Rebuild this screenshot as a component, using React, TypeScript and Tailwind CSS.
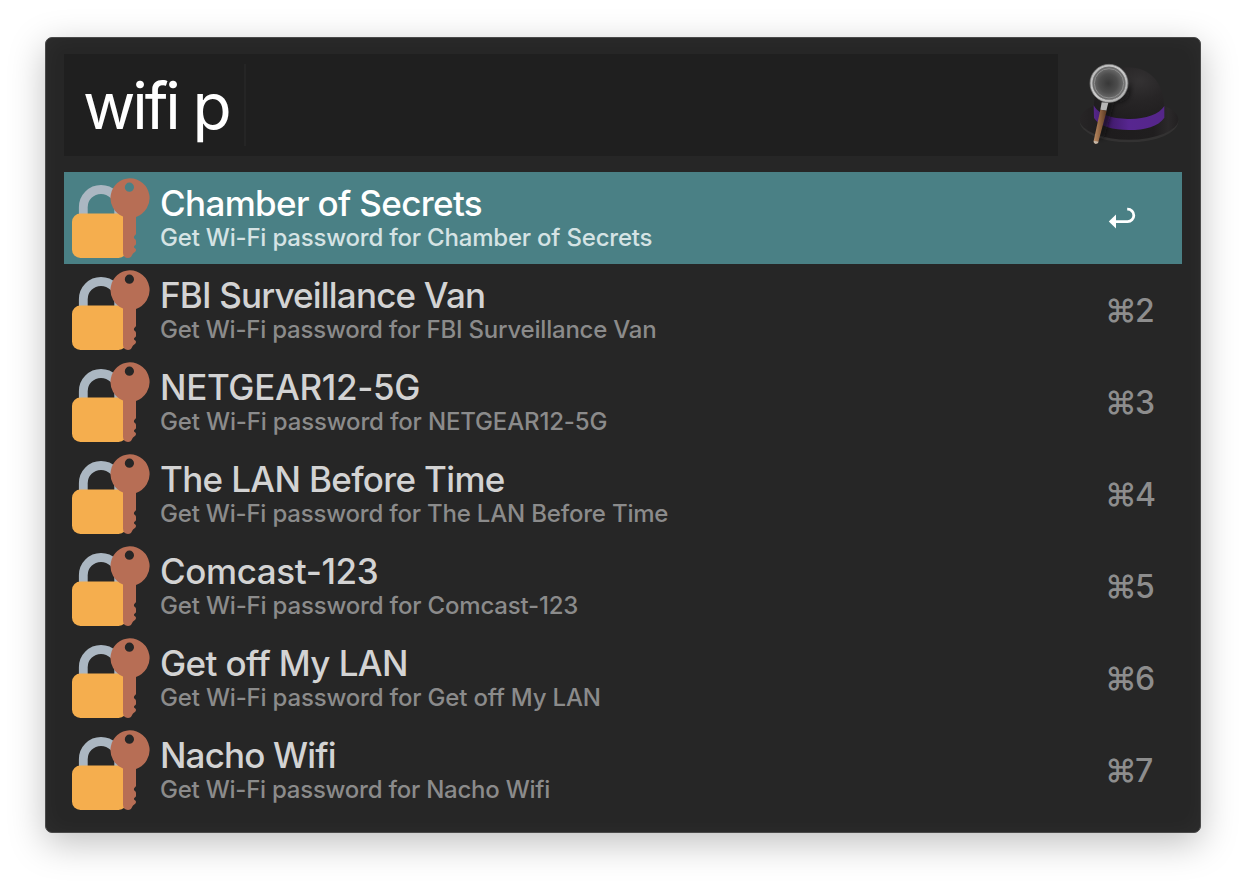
import React from "react";

type Result = { name: string; key: string; title: string; sub: string };

const results: Result[] = [
  { name: "Chamber of Secrets", key: "", title: "tracking-[-0.65px]", sub: "tracking-[-0.2px]" },
  { name: "FBI Surveillance Van", key: "2", title: "tracking-[-0.82px]", sub: "tracking-[-0.22px]" },
  { name: "NETGEAR12-5G", key: "3", title: "tracking-[-0.34px]", sub: "tracking-[-0.16px]" },
  { name: "The LAN Before Time", key: "4", title: "tracking-[-0.66px]", sub: "tracking-[-0.2px]" },
  { name: "Comcast-123", key: "5", title: "tracking-[-0.4px]", sub: "tracking-[-0.18px]" },
  { name: "Get off My LAN", key: "6", title: "tracking-[-0.6px]", sub: "tracking-[-0.18px]" },
  { name: "Nacho Wifi", key: "7", title: "tracking-[-0.85px]", sub: "tracking-[-0.24px]" },
];

function LockKey() {
  return (
    <svg className="h-20 w-20 shrink-0" viewBox="0 0 80 80">
      <path d="M12.3 40V29.2a17.7 17.7 0 0 1 35.4 0V40" fill="none" stroke="#abb7c2" strokeWidth="8.8" />
      <rect x="1" y="35.6" width="55" height="44.4" rx="8.5" fill="#f5ae4e" />
      <path
        fillRule="evenodd"
        fill="#b76e55"
        d="M58.7.3a19.8 19.8 0 0 1 6.3 38.6V55.5q0 1.2-1 1.8-1.1.8-1.1 2t1 1.8q1.1.7 1.1 2v2.6q0 1.2-1.1 1.9-.9.5-.9 1.3t1 1.3q1 .6 1 1.8 0 1.6-1.4 2.3-1.9 1-2.5 2.6-1 3-4.1 3-5 0-5-5.4V38.5A19.8 19.8 0 0 1 58.7.3ZM58.4 4.6a4.6 4.6 0 1 0 0 9.2a4.6 4.6 0 0 0 0-9.2Z"
      />
    </svg>
  );
}

function Hat() {
  return (
    <svg className="h-[110px] w-[130px] shrink-0" viewBox="0 0 390 330">
      <defs>
        <radialGradient id="crown" cx="0.65" cy="0.25" r="0.75">
          <stop offset="0" stopColor="#343233" />
          <stop offset="0.5" stopColor="#272526" />
          <stop offset="1" stopColor="#201e1f" />
        </radialGradient>
        <linearGradient id="brim" x1="0" x2="1">
          <stop offset="0" stopColor="#272526" />
          <stop offset="0.3" stopColor="#1e1c1d" />
          <stop offset="0.75" stopColor="#201e1f" />
          <stop offset="0.9" stopColor="#2b292a" />
          <stop offset="1" stopColor="#222021" />
        </linearGradient>
        <linearGradient id="ribbon" x1="0" x2="1">
          <stop offset="0" stopColor="#552689" />
          <stop offset="0.2" stopColor="#3f1a68" />
          <stop offset="0.5" stopColor="#572690" />
          <stop offset="1" stopColor="#552689" />
        </linearGradient>
        <radialGradient id="lens" cx="0.48" cy="0.5" r="0.55">
          <stop offset="0" stopColor="#383838" />
          <stop offset="0.5" stopColor="#4d4d4d" />
          <stop offset="1" stopColor="#7b7b7b" />
        </radialGradient>
        <linearGradient id="metal" x1="0" y1="0" x2="1" y2="1">
          <stop offset="0" stopColor="#b4b4b4" />
          <stop offset="0.5" stopColor="#cccccc" />
          <stop offset="1" stopColor="#a9a9a9" />
        </linearGradient>
        <linearGradient id="wood" x1="0" x2="1">
          <stop offset="0" stopColor="#bd8e66" />
          <stop offset="0.5" stopColor="#8e6240" />
          <stop offset="1" stopColor="#5a3a24" />
        </linearGradient>
        <filter id="soft" x="-40%" y="-40%" width="180%" height="180%">
          <feGaussianBlur stdDeviation="6" />
        </filter>
      </defs>
      <ellipse cx="192" cy="214" rx="148" ry="63" fill="#333232" />
      <ellipse cx="192" cy="209" rx="148" ry="60" fill="url(#brim)" />
      <path d="M86 190C84 100 122 52 188 52S300 96 298 186C270 216 118 224 86 190Z" fill="url(#crown)" />
      <path d="M86 166C104 198 150 207 196 207S284 192 298 168V203C280 230 240 240 192 240S104 230 87 204Z" fill="url(#ribbon)" />
      <path d="M148 158L118 262 100 268 122 158Q190 150 194 92Q208 158 148 158Z" fill="#0b0b0b" opacity="0.65" filter="url(#soft)" />
      <circle cx="132" cy="100" r="50" fill="url(#lens)" />
      <circle cx="132" cy="100" r="44" fill="none" stroke="#8b8b8b" strokeWidth="3" />
      <circle cx="132" cy="100" r="53" fill="none" stroke="url(#metal)" strokeWidth="7" />
      <circle cx="132" cy="100" r="57" fill="none" stroke="#858585" strokeWidth="2" />
      <path d="M110 157L130 158 124 182 106 179Z" fill="#b5b5b5" />
      <path d="M106 179L125 182 100 276Q98 282 91 281Q85 279 86 273Z" fill="url(#wood)" />
      <path d="M86 272L101 275Q99 282 91 281Q85 279 86 272Z" fill="#c4b7a9" />
    </svg>
  );
}

function Return() {
  return (
    <svg className="mr-[46px] h-[24px] w-[28px] shrink-0" viewBox="0 0 28 24">
      <path d="M6 15.6H19a6 6 0 0 0 0-12.4H18.6" fill="none" stroke="#fff" strokeWidth="2.8" transform="translate(.6 0)" />
      <path d="M.8 15.6L8 8.6V22.6Z" fill="#fff" />
    </svg>
  );
}

export default function App() {
  return (
    <div className="h-[886px] w-[1246px] overflow-hidden bg-white pt-[37px] pl-[45px] font-['Inter',sans-serif]">
      <main className="flex h-[796px] w-[1156px] flex-col rounded-[7px] border border-[#4a4a4a] bg-[#262626] pt-4 pl-[18px] shadow-[0_10px_36px_rgba(0,0,0,0.25),inset_0_0_24px_rgba(255,255,255,0.035)]">
        <header className="flex h-[118px]">
          <div className="flex h-[102px] w-[994px] items-center bg-[#1f1f1f] pl-[19px]">
            <span className="w-[161px] pt-[2px] text-[64px] leading-[102px] font-normal tracking-[-3.1px] whitespace-pre text-white">wifi p</span>
            <span className="h-[82px] w-[2px] bg-[#252525]" />
          </div>
          <div className="-mt-1 ml-[7px]">
            <Hat />
          </div>
        </header>
        <ul className="w-[1118px]">
          {results.map((r, i) => (
            <li key={r.name} className={i === 0 ? "flex h-[92px] items-center bg-[#4a8085] pl-[7px]" : "flex h-[92px] items-center pl-[7px]"}>
              <LockKey />
              <div className="ml-[9px] flex grow flex-col whitespace-nowrap">
                <span className={`${r.title} ${i === 0 ? "text-white" : "text-[#d3d3d3]"} pt-px text-[35px] leading-[38px] font-[450]`}>{r.name}</span>
                <span className={`${r.sub} ${i === 0 ? "text-[#d5e3e4]" : "text-[#8b8b8b]"} text-[24px] leading-[31px] font-[450]`}>
                  Get Wi-Fi password for {r.name}
                </span>
              </div>
              {i === 0 ? (
                <Return />
              ) : (
                <span className="w-[77px] shrink-0 pt-px text-[32px] leading-[40px] font-[450] tracking-[-1.6px] text-[#8d8d8d]">⌘{r.key}</span>
              )}
            </li>
          ))}
        </ul>
      </main>
    </div>
  );
}
